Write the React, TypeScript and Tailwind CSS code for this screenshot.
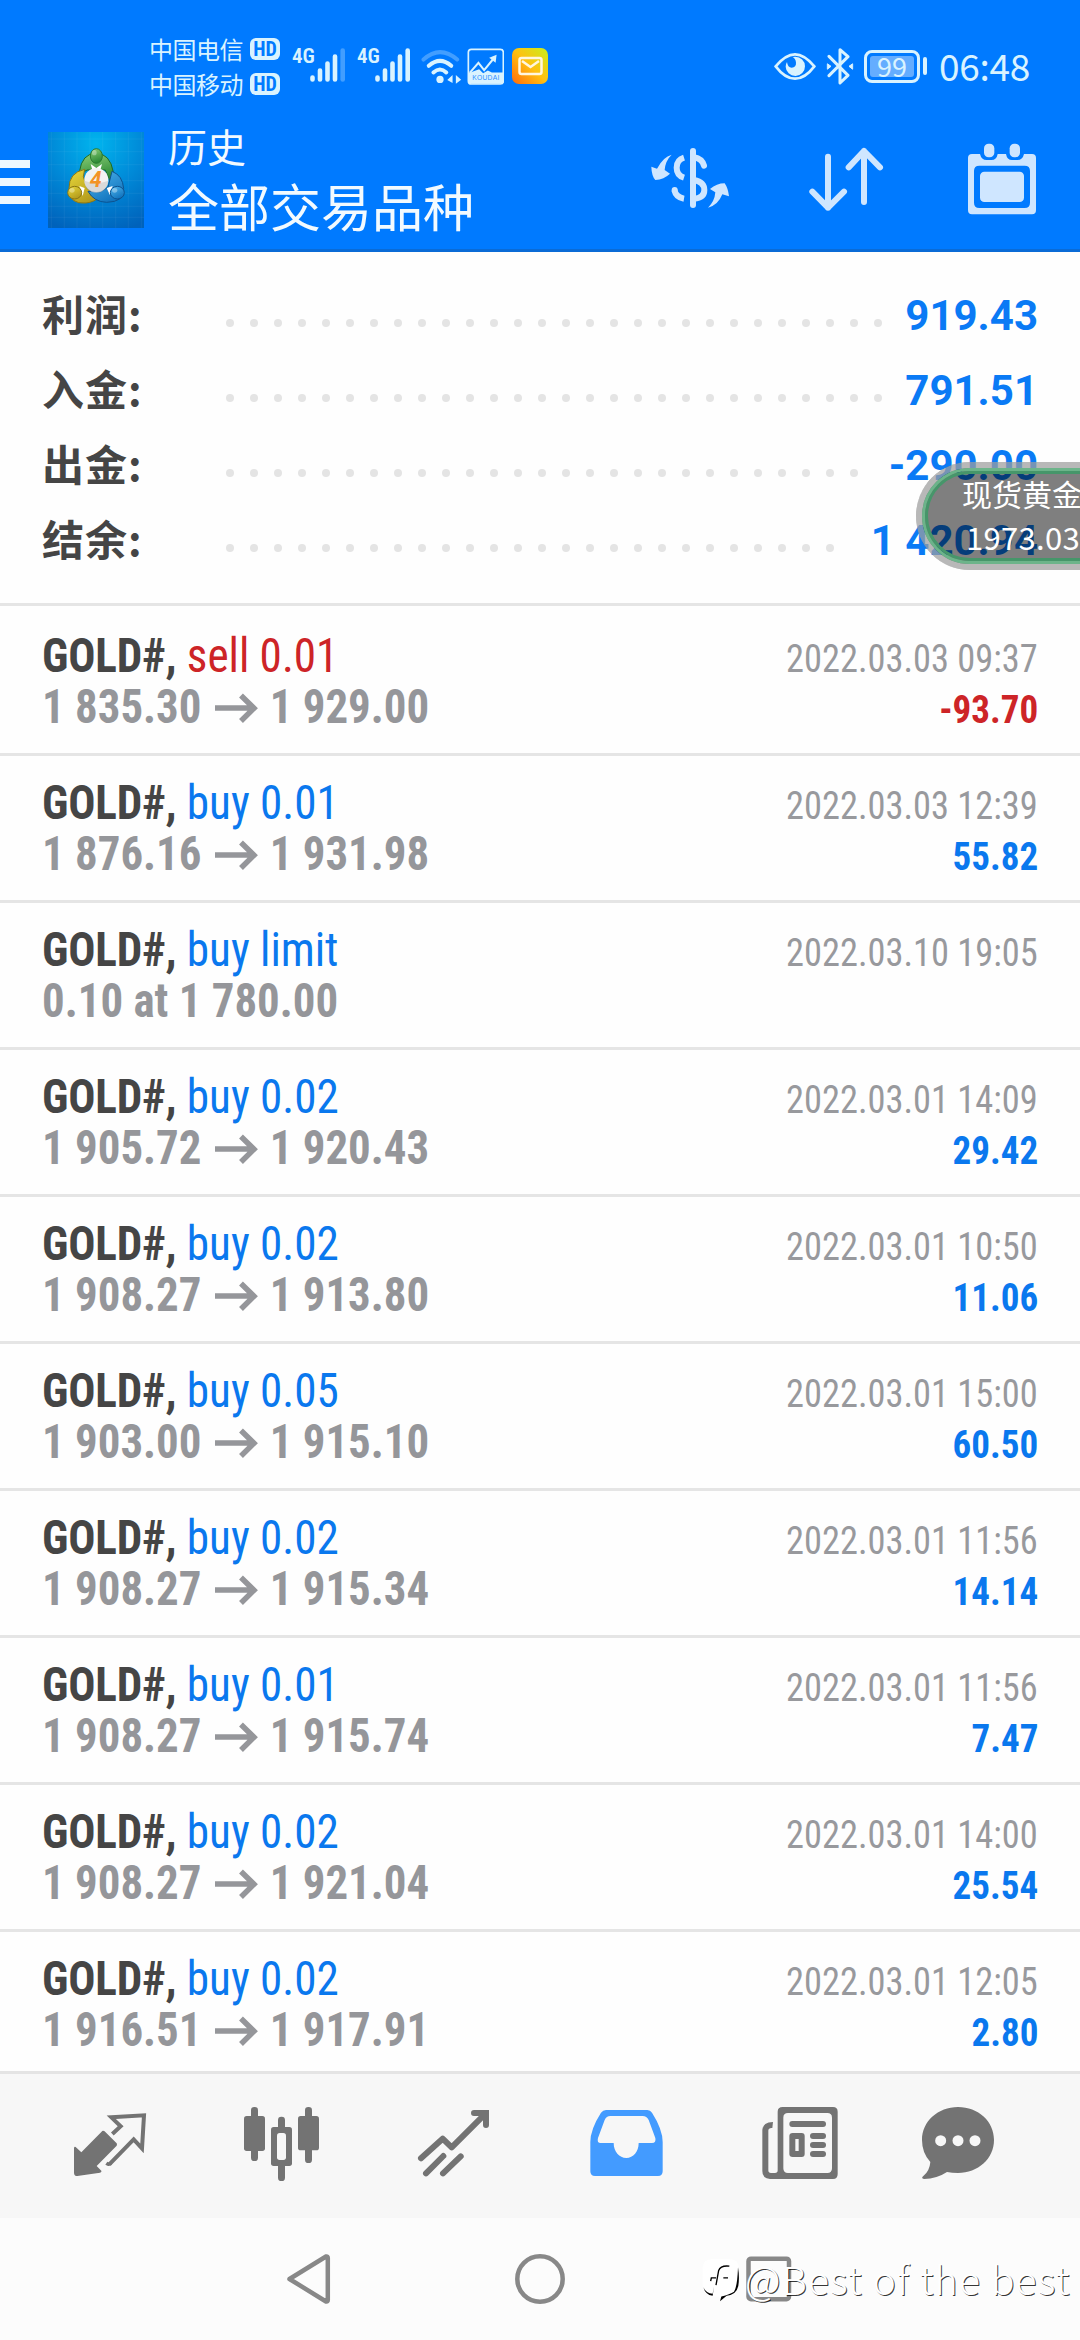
type Deal = {
  side: 'buy' | 'sell';
  volume: string;
  open?: string;
  close?: string;
  note?: string;
  time: string;
  profit?: string;
};

const deals: Deal[] = [
  { side: 'sell', volume: '0.01', open: '1 835.30', close: '1 929.00', time: '2022.03.03 09:37', profit: '-93.70' },
  { side: 'buy', volume: '0.01', open: '1 876.16', close: '1 931.98', time: '2022.03.03 12:39', profit: '55.82' },
  { side: 'buy', volume: 'limit', note: '0.10 at 1 780.00', time: '2022.03.10 19:05' },
  { side: 'buy', volume: '0.02', open: '1 905.72', close: '1 920.43', time: '2022.03.01 14:09', profit: '29.42' },
  { side: 'buy', volume: '0.02', open: '1 908.27', close: '1 913.80', time: '2022.03.01 10:50', profit: '11.06' },
  { side: 'buy', volume: '0.05', open: '1 903.00', close: '1 915.10', time: '2022.03.01 15:00', profit: '60.50' },
  { side: 'buy', volume: '0.02', open: '1 908.27', close: '1 915.34', time: '2022.03.01 11:56', profit: '14.14' },
  { side: 'buy', volume: '0.01', open: '1 908.27', close: '1 915.74', time: '2022.03.01 11:56', profit: '7.47' },
  { side: 'buy', volume: '0.02', open: '1 908.27', close: '1 921.04', time: '2022.03.01 14:00', profit: '25.54' },
  { side: 'buy', volume: '0.02', open: '1 916.51', close: '1 917.91', time: '2022.03.01 12:05', profit: '2.80' },
];

const summary = [
  { label: '利润:', value: '919.43', dots: 28 },
  { label: '入金:', value: '791.51', dots: 28 },
  { label: '出金:', value: '-290.00', dots: 27 },
  { label: '结余:', value: '1 420.94', dots: 26 },
];

function Signal({ weak }: { weak?: boolean }) {
  return (
    <div className="flex h-[37px] w-[65px] items-start">
      <span className="w-[18px] font-['Roboto_Condensed','Roboto'] text-[21px] leading-[17px] font-semibold font-stretch-condensed">4G</span>
      <svg viewBox="0 0 36 37" className="h-[37px] w-9" stroke="currentColor" strokeWidth="4.6" strokeLinecap="round">
        <path d="M2.5 31.500V29.500M10 31.500V22.500M17.500 31.500V15.500M25 31.500V8.500" />
        <path d="M32.700 31.500V2.500" opacity={weak ? 0.3 : 1} />
      </svg>
    </div>
  );
}

function Carrier({ name }: { name: string }) {
  return (
    <div className="flex h-[35px] items-center">
      <span className="w-[101px] text-[24px] leading-[35px] tracking-[-0.5px]">{name}</span>
      <span className="flex h-[22px] w-[30px] items-center justify-center rounded-md bg-[#d9f3ff] font-['Roboto_Condensed','Roboto'] text-[20px] leading-none font-bold text-[#007aff] font-stretch-condensed">
        HD
      </span>
    </div>
  );
}

function StatusBar() {
  return (
    <div className="flex h-[110px] text-[#d9f3ff]">
      <div className="flex flex-col pt-[31px] pl-[149px]">
        <Carrier name="中国电信" />
        <Carrier name="中国移动" />
      </div>
      <div className="flex pt-12 pl-3">
        <Signal weak />
        <Signal />
        <svg viewBox="865 80 132 112" className="-ml-[3px] h-[37px] w-11" fill="none" stroke="currentColor" strokeWidth="12" strokeLinecap="round">
          <path d="M878 115Q928 70 980 115" opacity="0.3" />
          <path d="M894 134Q928 104 962 134M908 154Q928 136 947 154" />
          <circle cx="928" cy="175" r="11" fill="currentColor" stroke="none" />
          <path d="M966 162v24l-16-9zM976 162v26l16-12z" fill="currentColor" stroke="none" />
        </svg>
        <svg viewBox="1010 84 110 110" className="ml-1 h-[37px] w-[37px]">
          <rect x="1014" y="88" width="104" height="103" rx="9" fill="none" stroke="currentColor" strokeWidth="5" />
          <path d="M1014 159l32-12 12 12 14-8 12 6h34v24q0 9-9 9h-86q-9 0-9-9z" fill="currentColor" />
          <path d="M1018 158l26-30 17 22 30-37" fill="none" stroke="currentColor" strokeWidth="6" />
          <path d="M1098 104l-3 24-19-15z" fill="currentColor" />
          <text x="1066" y="180" textAnchor="middle" fontSize="20" fill="#2f8fff" fontFamily="Liberation Sans" textLength="80">KOUDAI</text>
        </svg>
        <svg viewBox="0 0 36 36" className="ml-2 h-9 w-9">
          <defs>
            <linearGradient id="mail" x1="0" y1="1" x2="1" y2="0">
              <stop offset="0" stopColor="#ff6a0c" />
              <stop offset="0.5" stopColor="#ffc010" />
              <stop offset="1" stopColor="#c8f01c" />
            </linearGradient>
          </defs>
          <rect width="36" height="36" rx="7" fill="url(#mail)" />
          <rect x="7.500" y="10" width="22" height="16" rx="2" fill="none" stroke="#fff6df" strokeWidth="2.500" />
          <path d="M10 13l8.500 6 8.500-6" fill="none" stroke="#fff6df" strokeWidth="2.500" />
        </svg>
      </div>
      <div className="ml-auto flex items-start pt-12 pr-[50px]">
        <svg viewBox="100 84 126 111" className="h-[37px] w-[42px]">
          <path d="M105 139Q135 103 163 103T221 139Q193 176 163 176T105 139z" fill="none" stroke="currentColor" strokeWidth="8" />
          <path d="M164 110a29 29 0 1 1-29 30q0-8 4-14 2 17 14 17 14-2 13-15-1-12-10-17z" fill="currentColor" />
        </svg>
        <svg viewBox="252 84 90 111" className="ml-[9px] h-[37px] w-[30px]" fill="none" stroke="currentColor" strokeWidth="9" strokeLinejoin="round" strokeLinecap="round">
          <path d="M264 109l57 57-24 23V89l24 21-57 57" />
          <path d="M260 132l10 7-10 8zM334 132l-10 7 10 8z" fill="currentColor" strokeWidth="3" />
        </svg>
        <div className="mt-0.5 ml-[9px] flex h-[33px] w-[56px] items-center justify-center rounded-lg border-[3px] border-[#d9f3ff] p-[3px]">
          <span className="flex h-[21px] w-full items-center justify-center rounded-[3px] bg-[#64adff] pb-0.5 font-['Noto_Sans_CJK_SC'] text-[27px] leading-none">99</span>
        </div>
        <span className="mt-[9px] ml-[3px] h-[18px] w-1 rounded-full bg-[#d9f3ff]" />
        <span className="-mt-0.5 ml-3 font-['Noto_Sans_CJK_SC'] text-[37px] leading-[39px] tracking-[-0.3px]">06:48</span>
      </div>
    </div>
  );
}

function AppLogo() {
  return (
    <svg viewBox="144 66 288 288" className="ml-[18px] h-24 w-24">
      <defs>
        <radialGradient id="sky" cx="0.5" cy="0.12" r="0.95">
          <stop offset="0" stopColor="#00b4ee" />
          <stop offset="0.5" stopColor="#008ad8" />
          <stop offset="1" stopColor="#0062bb" />
        </radialGradient>
        <linearGradient id="green" x1="0" y1="0" x2="0.3" y2="1">
          <stop offset="0" stopColor="#8ed07a" />
          <stop offset="1" stopColor="#2c8a35" />
        </linearGradient>
        <linearGradient id="gold" x1="0" y1="0" x2="0.6" y2="1">
          <stop offset="0" stopColor="#e8d93c" />
          <stop offset="1" stopColor="#b39a1c" />
        </linearGradient>
        <linearGradient id="azure" x1="0" y1="0" x2="0.6" y2="1">
          <stop offset="0" stopColor="#4fb6ee" />
          <stop offset="1" stopColor="#1173bd" />
        </linearGradient>
      </defs>
      <rect x="144" y="66" width="288" height="288" fill="url(#sky)" />
      <path
        d="M154 66V354M193 66V354M231 66V354M270 66V354M308 66V354M347 66V354M385 66V354M424 66V354M144 87H432M144 125H432M144 164H432M144 212H432M144 250H432M144 289H432M144 322H432"
        stroke="#fff"
        strokeOpacity="0.1"
        strokeWidth="1.500"
      />
      <path d="M238 186Q246 130 288 130T340 186Q344 200 330 214L316 180H262L254 184z" fill="url(#green)" stroke="#1d6a26" strokeWidth="3" />
      <path d="M254 178Q206 188 207 236T258 279Q284 276 296 262L262 236 250 200z" fill="url(#gold)" stroke="#8b7614" strokeWidth="3" />
      <path d="M336 184Q368 196 371 236T320 277Q282 276 264 244L300 246 324 232z" fill="url(#azure)" stroke="#0d528f" strokeWidth="3" />
      <path d="M272 162l17 12 17-12-6 22h-22zM238 228l16 6-6 24zM338 228l-18 6 10 22z" fill="#fff" />
      <circle cx="289" cy="210" r="36" fill="#f2f2f2" />
      <path d="M253 212a36 36 0 0 0 72 0q-36 14-72 0z" fill="#cfcfcf" opacity="0.7" />
      <ellipse cx="289" cy="138" rx="18" ry="22" fill="url(#green)" stroke="#2a7a30" strokeWidth="3" />
      <ellipse cx="224" cy="248" rx="21" ry="19" fill="url(#gold)" stroke="#8b7614" strokeWidth="3" />
      <ellipse cx="352" cy="248" rx="21" ry="19" fill="url(#azure)" stroke="#0d528f" strokeWidth="3" />
      <ellipse cx="283" cy="128" rx="7" ry="8" fill="#fff" opacity="0.35" />
      <ellipse cx="216" cy="241" rx="8" ry="7" fill="#fff" opacity="0.35" />
      <ellipse cx="344" cy="241" rx="8" ry="7" fill="#fff" opacity="0.35" />
      <text x="287" y="231" textAnchor="middle" fontFamily="Roboto" fontWeight="700" fontStyle="italic" fontSize="64" fill="#f39325">4</text>
    </svg>
  );
}

function Toolbar() {
  return (
    <div className="flex h-[142px] items-start border-b-[3px] border-[#0a6bd6]">
      <div className="mt-[50px] flex w-[30px] flex-col gap-2.5">
        <span className="h-2 bg-[#eef8ff]" />
        <span className="h-2 bg-[#eef8ff]" />
        <span className="h-2 bg-[#eef8ff]" />
      </div>
      <div className="pt-[22px]">
        <AppLogo />
      </div>
      <div className="ml-6 flex flex-col text-[#f2faff]">
        <span className="mt-2 text-[39px] leading-[54px]">历史</span>
        <span className="text-[51px] leading-[66px]">全部交易品种</span>
      </div>
      {/* Actions */}
      <div className="ml-auto flex pt-[25px] pr-[38px] text-[#cfe6ff]">
        <svg viewBox="90 45 240 240" className="h-20 w-20" fill="none" stroke="currentColor" strokeWidth="18" strokeLinecap="round">
          <path d="M219 93V255" />
          <path d="M192 113Q170 120 170 143T192 173" strokeLinecap="butt" />
          <path d="M163 210Q168 232 192 236" strokeLinecap="butt" />
          <circle cx="164" cy="210" r="9" fill="currentColor" stroke="none" />
          <path d="M222 112Q246 116 252 137" />
          <path d="M222 180Q253 186 253 210T222 236" />
          <path d="M155 104Q130 110 111 146L94 140Q95 168 106 180 132 178 150 161L134 150Q136 122 155 104z" fill="currentColor" stroke="none" />
          <path d="M264 263Q294 256 307 223L327 229Q324 204 314 190 290 190 270 207L286 217Q284 244 264 263z" fill="currentColor" stroke="none" />
        </svg>
        <svg viewBox="558 45 240 240" className="ml-[76px] h-20 w-20" fill="none" stroke="currentColor" strokeWidth="18" strokeLinecap="round" strokeLinejoin="round">
          <path d="M624 110V263M577 215L624 263 672 215" />
          <path d="M732 246V93M686 142L732 93 780 142" />
        </svg>
        <svg viewBox="1026 45 240 240" className="ml-[76px] h-20 w-20" fill="currentColor">
          <path
            fillRule="evenodd"
            d="M1056 102H1080Q1084 120 1100 120H1114Q1130 120 1133 102H1158Q1161 120 1176 120H1192Q1208 120 1212 102H1236Q1248 102 1248 114V270Q1248 283 1236 283H1056Q1044 283 1044 270V114Q1044 102 1056 102zM1078 137Q1062 137 1062 153V248Q1062 264 1078 264H1214Q1230 264 1230 248V153Q1230 137 1214 137z"
          />
          <rect x="1080" y="155" width="132" height="91" rx="13" />
          <rect x="1092" y="71" width="31" height="41" rx="14" />
          <rect x="1169" y="71" width="31" height="41" rx="14" />
        </svg>
      </div>
    </div>
  );
}

function Summary() {
  return (
    <div className="flex h-[354px] flex-col border-b-[3px] border-[#e5e5e5] pt-[26px]">
      {summary.map((row) => (
        <div key={row.label} className="flex h-[75px] items-center px-[42px] font-bold">
          <span className="w-[184px] pb-[5px] text-[42px] leading-[70px] tracking-[1px] text-[#454545]">{row.label}</span>
          <span className="flex gap-4 pt-3.5">
            {Array.from({ length: row.dots }, (_, i) => (
              <span key={i} className="h-2 w-2 rounded-full bg-[#e4e4e4]" />
            ))}
          </span>
          <span className="ml-auto font-['Roboto'] text-[42px] leading-[75px] whitespace-nowrap text-[#0a7af5]">{row.value}</span>
        </div>
      ))}
    </div>
  );
}

function DealRow({ deal }: { deal: Deal }) {
  const tone = deal.side === 'sell' ? 'text-[#cd2427]' : 'text-[#0a78ee]';
  return (
    <div className="h-[147px] shrink-0 border-b-[3px] border-[#e5e5e5] px-[42px] pt-[21px] font-['Roboto_Condensed','Roboto'] leading-[51px] font-stretch-condensed first:h-[150px] first:pt-6">
      <div className="flex h-[51px] items-baseline justify-between">
        <span className="origin-left scale-x-[0.94] text-[48px] leading-[51px]">
          <b className="font-bold tracking-[-0.2px] text-[#454545]">GOLD#,</b>{' '}
          <span className={tone}>
            {deal.side} {deal.volume}
          </span>
        </span>
        <span className="origin-right scale-x-[0.933] text-[39px] leading-[51px] text-[#98999d]">{deal.time}</span>
      </div>
      <div className="flex h-[51px] items-baseline justify-between font-bold">
        <span className="flex origin-left scale-x-[0.935] items-baseline text-[48px] leading-[51px] text-[#95969a]">
          {deal.note ?? (
            <>
              {deal.open}
              <svg viewBox="0 0 43 30" preserveAspectRatio="none" className="mr-[13px] ml-[14px] h-[30px] w-[46px]" fill="none" stroke="currentColor" strokeWidth="5.500">
                <path d="M0 15H39M26 2.500L39 15.200 26 28" />
              </svg>
              {deal.close}
            </>
          )}
        </span>
        {deal.profit && <span className={`origin-right scale-x-[0.95] text-[39px] leading-[51px] ${tone}`}>{deal.profit}</span>}
      </div>
    </div>
  );
}

function TabBar() {
  return (
    <div className="flex h-[147px] border-t-[3px] border-[#e4e4e4] bg-[#f7f7f7] pl-6 text-[#737373]">
      <svg viewBox="-48 42 516 432" className="h-36 w-[172px]" fill="currentColor">
        <path d="M189 212Q193 212 196 216L230 250Q232 253 230 257L170 318 184 332Q186 337 180 338L112 348Q102 348 102 338V264Q103 259 107 261L124 277 184 216Q187 212 189 212z" />
        <path d="M217 222L242 199 214 172 312 166 306 265 281 238 208 313" fill="none" stroke="currentColor" strokeWidth="12" />
        <path d="M196 314l6-9 14 8q-4 6-12 5z" />
      </svg>
      <svg viewBox="468 42 516 432" className="h-36 w-[172px]" fill="currentColor">
        <rect x="633" y="141" width="21" height="162" rx="10" />
        <rect x="612" y="168" width="63" height="105" rx="8" />
        <rect x="795" y="141" width="21" height="168" rx="10" />
        <rect x="774" y="168" width="63" height="103" rx="8" />
        <rect x="714" y="170" width="21" height="50" rx="10" />
        <rect x="714" y="305" width="21" height="58" rx="10" />
        <rect x="693" y="201" width="63" height="117" rx="8" />
        <rect x="711" y="219" width="27" height="81" rx="8" fill="#f7f7f7" />
      </svg>
      <svg viewBox="984 42 516 432" className="h-36 w-[172px]" fill="none" stroke="currentColor" strokeWidth="18" strokeLinecap="round">
        <path d="M1143 295L1208 236 1235 262 1334 163" strokeLinejoin="round" />
        <path d="M1302 159H1338V195" />
        <path d="M1158 340L1210 288M1209 340L1262 289" />
        <path d="M1206 281l11 10M1259 283l10 10" strokeWidth="5" strokeLinecap="butt" />
      </svg>
      <svg viewBox="-60 42 516 432" className="h-36 w-[172px]">
        <path
          fillRule="evenodd"
          fill="#439bff"
          d="M138 150H262Q271 150 276 158 308 208 308 246V334Q308 348 294 348H105Q91 348 91 334V246Q91 208 123 158 129 150 138 150zM151 168Q139 168 134 180L114 234Q110 249 122 249H161C161 275 178 294 199 294S236 275 236 249H276Q289 249 286 234L266 180Q260 168 248 168z"
        />
      </svg>
      <svg viewBox="456 42 516 432" className="h-36 w-[172px]" fill="currentColor">
        <path
          fillRule="evenodd"
          d="M668 141H819Q833 141 833 155V342Q833 357 819 357H630Q607 355 607 333V209Q609 187 639 186L637 204Q625 203 625 212V331Q625 339 633 339H645Q653 339 653 331V155Q653 141 668 141zM684 159Q670 159 670 173V325Q670 339 684 339H802Q816 339 816 325V173Q816 159 802 159z"
        />
        <rect x="688" y="183" width="110" height="18" rx="9" />
        <path fillRule="evenodd" d="M698 219H725Q734 219 734 228V282Q734 291 725 291H698Q688 291 688 282V228Q688 219 698 219zM706 237V273H716V237z" />
        <rect x="750" y="219" width="48" height="18" rx="9" />
        <rect x="750" y="246" width="48" height="18" rx="9" />
        <rect x="750" y="273" width="48" height="18" rx="9" />
      </svg>
      <svg viewBox="972 42 516 432" className="h-36 w-[172px]" fill="currentColor">
        <path d="M1194 141C1255 141 1302 184 1302 240S1254 339 1194 339Q1176 339 1161 336 1131 356 1092 357 1082 355 1090 348 1109 333 1111 306 1086 279 1086 240C1086 184 1134 141 1194 141z" />
        <g fill="#f7f7f7">
          <circle cx="1142" cy="242" r="16.500" />
          <circle cx="1194" cy="242" r="16.500" />
          <circle cx="1245" cy="242" r="16.500" />
        </g>
      </svg>
    </div>
  );
}

function SystemNav() {
  return (
    <div className="relative flex h-[122px] items-center justify-center bg-[#fcfcfc]">
      <svg viewBox="0 0 230 122" className="h-[122px] w-[230px]" fill="none" stroke="#888" strokeWidth="4.500" strokeLinejoin="round">
        <path d="M94.500 61L131 38.500Q132.800 38 132.800 40V82Q132.800 84 131 83.500z" />
      </svg>
      <svg viewBox="0 0 230 122" className="h-[122px] w-[230px]" fill="none" stroke="#888" strokeWidth="4.500">
        <circle cx="115" cy="61" r="22.700" />
      </svg>
      <svg viewBox="0 0 230 122" className="h-[122px] w-[230px]" fill="none" stroke="#888" strokeWidth="4.500">
        <rect x="93.500" y="40.700" width="40.500" height="40.500" rx="2.500" />
      </svg>
      {/* Watermark */}
      <div className="absolute top-[33px] left-[702px] flex items-center">
        <svg viewBox="66 120 114 140" className="mt-1 h-[47px] w-[38px]">
          <path d="M92 126H152Q176 128 176 150V206Q174 232 140 234L120 252 118 238H96Q70 232 68 206V150Q70 128 92 126z" fill="#fff" />
          <path d="M174 150Q179 180 175 206 170 232 140 236L120 252 124 238Q150 232 162 224 172 208 174 150zM70 210Q76 232 98 236L102 208 98 230Q78 228 70 210z" fill="#000" />
          <path d="M108 204L116 160Q122 144 148 147M92 192L94 182 108 182M130 182H144" fill="none" stroke="#000" strokeWidth="4" />
        </svg>
        <span className="ml-[5px] font-['Noto_Sans_CJK_SC'] text-[39px] leading-[54px] font-light tracking-[1.2px] whitespace-nowrap text-white [text-shadow:1px_1px_0_rgba(0,0,0,0.8)]">
          @Best of the best
        </span>
      </div>
    </div>
  );
}

export default function App() {
  return (
    <div className="relative flex h-[2340px] w-[1080px] flex-col overflow-hidden bg-[#fefefe] font-['Noto_Sans_CJK_SC',sans-serif]">
      <header className="bg-[#007aff]">
        <StatusBar />
        <Toolbar />
      </header>
      <Summary />
      <main className="flex min-h-0 flex-1 flex-col overflow-hidden">
        {deals.map((deal, i) => (
          <DealRow key={i} deal={deal} />
        ))}
      </main>
      <TabBar />
      <SystemNav />

      {/* Floating quote */}
      <div className="absolute top-[462px] left-[916px] h-[108px] w-[220px] rounded-full bg-black/50">
        <div className="h-full w-full rounded-full border-[6px] border-white/45">
          <div className="h-full w-full rounded-full border-[3px] border-[#6cb48a]">
            <div className="h-full w-full rounded-full border-[3px] border-[#46966a] pl-[34px] text-white">
              <div className="text-[30px] leading-[38px] whitespace-nowrap">现货黄金</div>
              <div className="pl-1 text-[31px] leading-[50px] tracking-[0.3px] whitespace-nowrap">1973.03</div>
            </div>
          </div>
        </div>
      </div>
    </div>
  );
}
